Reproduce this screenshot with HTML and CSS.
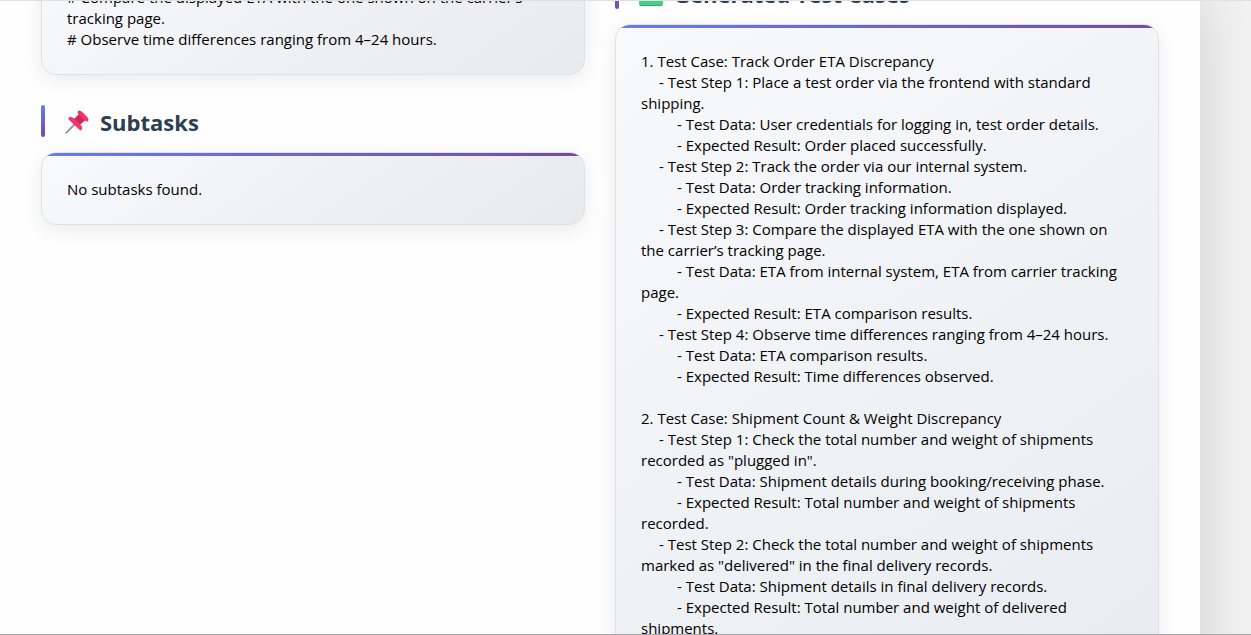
FILE: index.html
```
<!DOCTYPE html>
<html lang="en">
<head>
<meta charset="utf-8">
<title>Generated Test Cases</title>
<link rel="stylesheet" href="styles.css">
</head>
<body>
<div class="viewport">
<main class="container">
<div class="columns">
<section class="column">
<div class="card">
<p># Compare the displayed ETA with the one shown on the carrier’s tracking page.</p>
<p># Observe time differences ranging from 4–24 hours.</p>
</div>
<h2 class="heading">
<svg class="icon" viewBox="0 0 24 24" aria-hidden="true">
<path d="M1.200 22.800L9.500 14.500" stroke="#998ea4" stroke-width="1.800" stroke-linecap="round"/>
<path d="M9 9L15 3L21 9.500L16.500 13.500L14 15.500Z" fill="#ca2b52"/>
<path d="M13 1.200C14.300-.2 16.200 1 18.500 3.300L21 5.800C23.200 8 24.300 10 22.900 11.200C21.500 12.200 19.600 10.400 17.300 8.100L15.800 6.600C13.500 4.300 11.800 2.500 13 1.200Z" fill="#f8316a"/>
<path d="M3.600 7.600C5.300 6 8.300 7.300 10.800 9.800L14.100 13.100C16.600 15.600 18.200 18.400 16.400 20C15.600 20.700 14.600 19.900 13.700 19L4.700 10.500C3.700 9.500 2.900 8.400 3.600 7.600Z" fill="#f8316a"/>
</svg>
<span>Subtasks</span>
</h2>
<div class="card card-accent"><p>No subtasks found.</p></div>
</section>
<section class="column column-results">
<h2 class="heading">
<svg class="icon" viewBox="0 0 24 24" aria-hidden="true">
<rect width="24" height="24" rx="2" fill="#46cf86"/>
<path d="M1 23.500H23" stroke="#35a777" stroke-width="1"/>
<path d="M6 12L10 16L18 7" fill="none" stroke="#fff" stroke-width="3"/>
</svg>
<span>Generated Test Cases</span>
</h2>
<div class="card card-accent card-results">
<p>1. Test Case: Track Order ETA Discrepancy</p>
<p class="step">- Test Step 1: Place a test order via the frontend with standard shipping.</p>
<p class="detail">- Test Data: User credentials for logging in, test order details.</p>
<p class="detail">- Expected Result: Order placed successfully.</p>
<p class="step">- Test Step 2: Track the order via our internal system.</p>
<p class="detail">- Test Data: Order tracking information.</p>
<p class="detail">- Expected Result: Order tracking information displayed.</p>
<p class="step">- Test Step 3: Compare the displayed ETA with the one shown on the&nbsp;carrier’s tracking page.</p>
<p class="detail">- Test Data: ETA from internal system, ETA from carrier tracking page.</p>
<p class="detail">- Expected Result: ETA comparison results.</p>
<p class="step">- Test Step 4: Observe time differences ranging from 4–24 hours.</p>
<p class="detail">- Test Data: ETA comparison results.</p>
<p class="detail">- Expected Result: Time differences observed.</p>
<p class="next-case">2. Test Case: Shipment Count &amp; Weight Discrepancy</p>
<p class="step">- Test Step 1: Check the total number and weight of shipments recorded as "plugged in".</p>
<p class="detail">- Test Data: Shipment details during booking/receiving phase.</p>
<p class="detail">- Expected Result: Total number and weight of shipments recorded.</p>
<p class="step">- Test Step 2: Check the total number and weight of shipments marked as "delivered" in the final delivery records.</p>
<p class="detail">- Test Data: Shipment details in final delivery records.</p>
<p class="detail">- Expected Result: Total number and weight of delivered shipments.</p>
</div>
</section>
</div>
</main>
</div>
</body>
</html>
```
FILE: styles.css
```
* { box-sizing: border-box; }
body {
  margin: 0;
  background: #f1f1f1;
  color: #000;
  font: 15px/21px "Segoe UI", "Open Sans", "Noto Sans", sans-serif;
}
p { margin: 0; }
.viewport {
  height: 100vh;
  overflow: hidden;
  border-top: 1px solid #e1e1e1;
  border-bottom: 1px solid #a9a9ab;
}
.container {
  display: flow-root;
  margin-right: 51px;
  min-height: 100%;
  padding: 0 41px;
  background: #fefefe;
  box-shadow: 0 0 50px rgba(0, 0, 0, 0.14);
}
.columns {
  display: grid;
  grid-template-columns: 1fr 1fr;
  gap: 30px;
  margin-top: -41px;
}
.column-results { padding-top: 17px; }
.card {
  position: relative;
  overflow: hidden;
  padding: 26px 25px 24px;
  border: 1px solid #dee2e6;
  border-radius: 15px;
  background: linear-gradient(145deg, #f8fafc, #eeeff3 60%, #e7ebee);
  box-shadow: 0 5px 20px rgba(0, 0, 0, 0.08);
}
.card-accent::before {
  content: "";
  position: absolute;
  top: 0;
  left: 0;
  right: 0;
  height: 3px;
  background: linear-gradient(90deg, #667eea, #764ba2);
}
.card-results {
  min-height: 1000px;
  background: linear-gradient(145deg, #f8f9fb, #e9edf1 70%, #e9ecef);
}
.step { text-indent: 18px; }
.detail { text-indent: 36px; }
.next-case { margin-top: 21px; }
.heading {
  position: relative;
  display: flex;
  align-items: center;
  gap: 11px;
  margin: 30px 0 15px;
  padding: 2px 0 0 24px;
  color: #2c3e50;
  font-size: 22px;
  line-height: 30px;
  font-weight: 700;
}
.heading::before {
  content: "";
  position: absolute;
  left: 0;
  top: 0;
  bottom: 0;
  width: 4px;
  border-radius: 2px;
  background: linear-gradient(180deg, #667eea, #764ba2);
}
.column-results .heading { margin-top: 0; }
.icon {
  width: 24px;
  height: 24px;
  flex: none;
}
```
